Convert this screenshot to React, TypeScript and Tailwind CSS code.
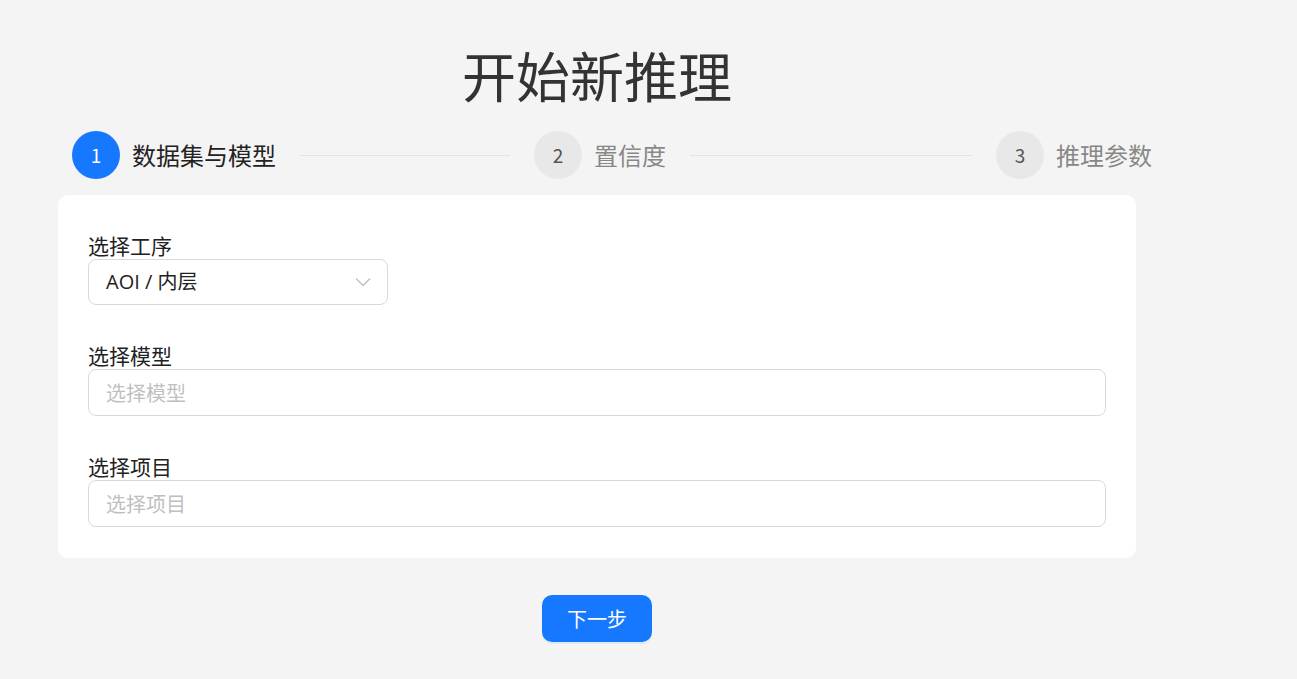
const font = { fontFamily: '"Noto Sans CJK SC", "Noto Sans", sans-serif' }

interface Step {
  num: number
  title: string
  active?: boolean
}

const steps: Step[] = [
  { num: 1, title: "数据集与模型", active: true },
  { num: 2, title: "置信度" },
  { num: 3, title: "推理参数" },
]

function Stepper() {
  return (
    <div className="ml-[14px] flex w-[1080px] items-center">
      {steps.map((step, i) => {
        const last = i === steps.length - 1
        return (
          <div key={step.num} className={last ? "flex items-center" : "flex flex-1 items-center"}>
            <div
              className={
                step.active
                  ? "flex h-12 w-12 items-center justify-center rounded-full bg-[#1677ff] text-[19px] text-white"
                  : "flex h-12 w-12 items-center justify-center rounded-full bg-[#e8e8e8] text-[19px] text-[#555]"
              }
            >
              {step.num}
            </div>
            <span
              className={
                step.active
                  ? "ml-3 text-[24px] leading-none text-[#222]"
                  : "ml-3 text-[24px] leading-none text-[#888]"
              }
            >
              {step.title}
            </span>
            {!last && <div className="mx-6 h-px flex-1 bg-[#e3e3e3]" />}
          </div>
        )
      })}
    </div>
  )
}

function Field({ label, children }: { label: string; children: React.ReactNode }) {
  return (
    <div>
      <div className="h-[34px] pt-[6px] text-[21px] leading-[28px] text-[#222]">{label}</div>
      {children}
    </div>
  )
}

export default function App() {
  return (
    <div className="min-h-[679px] w-full bg-[#f4f4f4]" style={font}>
      <div className="ml-[58px] w-[1078px] pt-[48px]">
        <h1 className="text-center text-[54px] leading-none font-normal text-[#333]">开始新推理</h1>
        <div className="mt-[29px]">
          <Stepper />
        </div>
        <div className="mt-4 flex flex-col gap-[30px] rounded-[10px] bg-white px-[30px] pt-[30px] pb-[31px]">
          <Field label="选择工序">
            <div className="flex h-[46px] w-[300px] items-center justify-between rounded-[8px] border border-[#d9d9d9] pr-4 pl-[17px]">
              <span
                className="text-[20px] text-[#222]"
                style={{ fontFamily: '"Open Sans", "Noto Sans CJK SC", sans-serif' }}
              >
                AOI / 内层
              </span>
              <svg width="16" height="10" viewBox="0 0 16 10" fill="none">
                <path d="M1 1.5 L8 8.5 L15 1.5" stroke="#bfbfbf" strokeWidth="1.3" />
              </svg>
            </div>
          </Field>
          <Field label="选择模型">
            <div className="flex h-[47px] w-full items-center rounded-[8px] border border-[#d9d9d9] pl-[17px]">
              <span className="text-[20px] text-[#bfbfbf]">选择模型</span>
            </div>
          </Field>
          <Field label="选择项目">
            <div className="flex h-[47px] w-full items-center rounded-[8px] border border-[#d9d9d9] pl-[17px]">
              <span className="text-[20px] text-[#bfbfbf]">选择项目</span>
            </div>
          </Field>
        </div>
        <div className="mt-[37px] flex justify-center">
          <button className="h-[47px] w-[110px] rounded-[10px] bg-[#1677ff] text-[20px] text-white shadow-[0_2px_0_rgba(5,145,255,0.1)]">
            下一步
          </button>
        </div>
      </div>
    </div>
  )
}
